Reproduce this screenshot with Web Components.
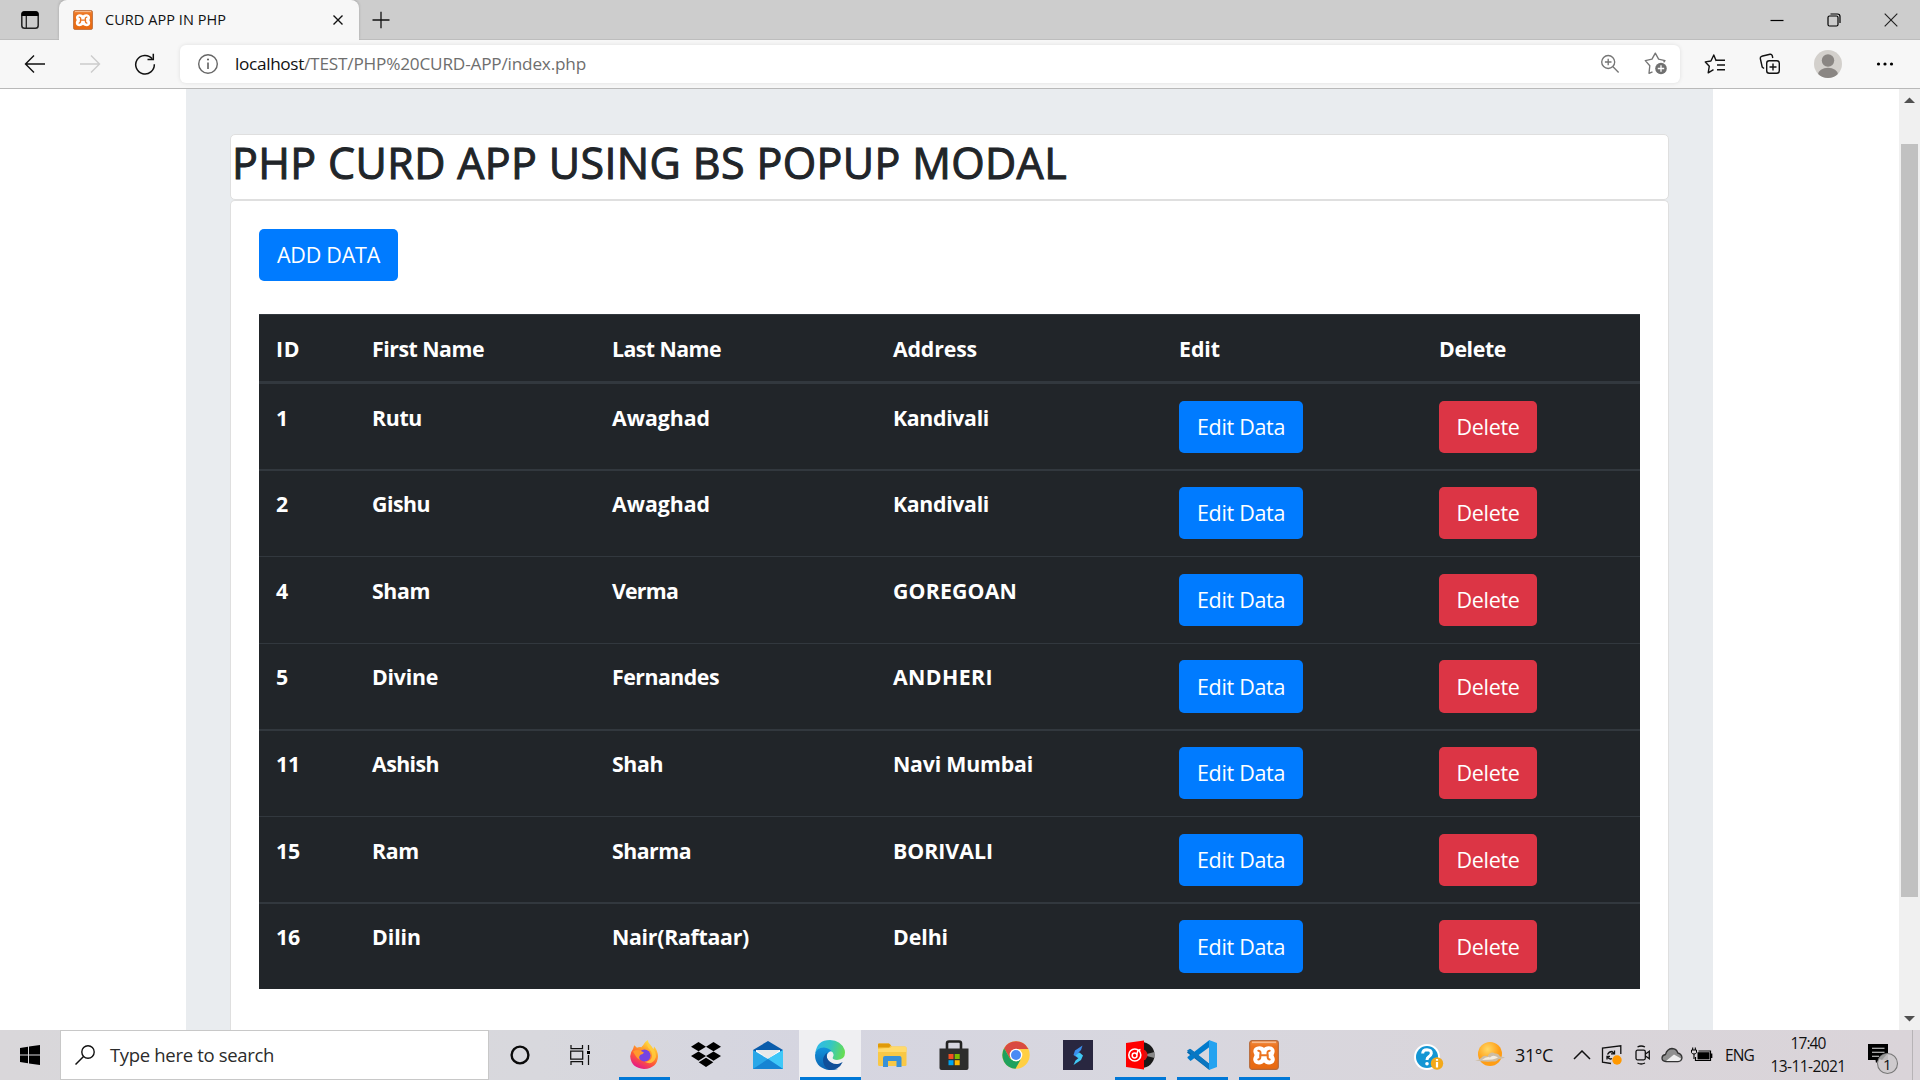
<!DOCTYPE html>
<html lang="en">
<head>
<meta charset="utf-8">
<title>CURD APP IN PHP</title>
<style>
html,body{margin:0;height:100%;overflow:hidden;background:#fff;font-family:"Open Sans","Noto Sans",sans-serif}
</style>
</head>
<body>
<browser-window></browser-window>
<script>
const ICONS = {
  tabs: [20,20,`<rect x="1.8" y="1.8" width="16.4" height="16.4" rx="2.8" fill="none" stroke="#222" stroke-width="1.5"/><path d="M1.5 6V4.200Q1.500 1.200 4.500 1.200H15.500Q18.500 1.200 18.500 4.200V6Z" fill="#000"/><path d="M6.300 6V18" stroke="#222" stroke-width="1.300"/>`],
  xampp: [30,30,`<defs><linearGradient id="x" x2="0" y2="1"><stop offset="0" stop-color="#f28a3c"/><stop offset=".2" stop-color="#ec7420"/><stop offset="1" stop-color="#e8690f"/></linearGradient></defs><rect x=".7" y=".7" width="28.600" height="28.600" rx="2.500" fill="url(#x)" stroke="#b5693a" stroke-width="1.200"/><path d="M3 2.300H27" stroke="#f7b98a" stroke-width="1.600"/><path d="M15 10.500C13.500 8.500 12.300 8 10.300 8C7.500 8 6 9.700 6.200 11.500C6.400 13.300 7.300 14 7.300 15.200C7.300 16.400 6.100 17.200 6 19.300C6 21.500 7.600 22.600 10 22.600C12.500 22.600 13.800 21.600 15 19.800C16.200 21.600 17.500 22.600 20 22.600C22.400 22.600 24 21.500 24 19.300C23.900 17.200 22.700 16.400 22.700 15.200C22.700 14 23.700 13.300 23.800 11.500C24 9.700 22.500 8 19.700 8C17.700 8 16.500 8.500 15 10.500Z" fill="#fff" stroke="#fff" stroke-width="3.600" stroke-linejoin="round"/><path d="M9.300 10.700Q12.500 11 11.200 15.200Q12 19 9.300 19.600M20.700 10.700Q17.500 11 18.800 15.200Q18 19 20.700 19.600M11.200 15.200H18.800" fill="none" stroke="#ec7420" stroke-width="2" stroke-linecap="round"/>`],
  x: [12,12,`<path d="M1.500 1.500L10.500 10.500M10.500 1.500L1.500 10.500" stroke="#111" stroke-width="1.400"/>`],
  plus: [18,18,`<path d="M9 .8V17.200M.5 9H17.500" stroke="#111" stroke-width="1.300"/>`],
  min: [14,14,`<path d="M.5 7.500H13.500" stroke="#000" stroke-width="1.200"/>`],
  max: [14,14,`<rect x="1" y="3" width="10" height="10" rx="1.500" fill="none" stroke="#000" stroke-width="1.200"/><path d="M3.500 1H10.500Q13 1 13 3.500V10" fill="none" stroke="#000" stroke-width="1.200"/>`],
  close: [14,14,`<path d="M.7 .7L13.300 13.300M13.300 .7L.7 13.300" stroke="#222" stroke-width="1.150"/>`],
  back: [22,20,`<path d="M21 10H1.500M10 1.500L1.500 10L10 18.500" fill="none" stroke="#111" stroke-width="1.400"/>`],
  fwd: [22,20,`<path d="M1 10H20.500M12 1.500L20.500 10L12 18.500" fill="none" stroke="#ccc" stroke-width="1.400"/>`],
  reload: [22,22,`<path d="M18.200 5.800A9.300 9.300 0 1 0 20.300 11.200" fill="none" stroke="#111" stroke-width="1.500"/><path d="M19.300 .8V6.500H13.500" fill="none" stroke="#111" stroke-width="1.500"/>`],
  info: [22,22,`<circle cx="11" cy="11" r="9.300" fill="none" stroke="#666" stroke-width="1.400"/><path d="M11 9.500V16" stroke="#555" stroke-width="1.500"/><circle cx="11" cy="6.600" r="1" fill="#555"/>`],
  zoom: [20,20,`<circle cx="8.200" cy="8" r="6.500" fill="none" stroke="#767676" stroke-width="1.350"/><path d="M13 12.800L18.600 18.400M8.200 4.700V11.300M4.900 8H11.500" stroke="#767676" stroke-width="1.350"/>`],
  staradd: [24,24,`<path d="M8.500 20.800L5 22.300L5.800 14.800L1.300 9.600L8 8.200L11.300 2.200L14.600 8.200L21 9.600L19.600 11.300" transform="translate(0 -1)" fill="none" stroke="#767676" stroke-width="1.350" stroke-linejoin="round"/><circle cx="17" cy="16.500" r="5.800" fill="#707070"/><path d="M17 13.300V19.700M13.800 16.500H20.200" stroke="#fff" stroke-width="1.300"/>`],
  favs: [22,22,`<path d="M12.200 8L9.800 2L6.900 8L1.300 8.900L5.300 13.200L4.200 19.800L9.500 16.700" fill="none" stroke="#111" stroke-width="1.400" stroke-linejoin="round"/><path d="M12 7.200H21M13 12H21M13 16.800H21" stroke="#111" stroke-width="1.400"/>`],
  coll: [22,22,`<rect x="7.700" y="7.700" width="12.600" height="12.600" rx="2.500" fill="none" stroke="#111" stroke-width="1.400"/><path d="M14 10.500V17.500M10.500 14H17.500" stroke="#111" stroke-width="1.400"/><path d="M5 15.500L3.200 14L1.300 5.500Q1 3.800 2.700 3.300L11 1.300Q12.600 1 13.200 2.500L13.800 5" fill="none" stroke="#111" stroke-width="1.400"/>`],
  avatar: [28,28,`<defs><clipPath id="c"><circle cx="14" cy="14" r="14"/></clipPath></defs><g clip-path="url(#c)"><rect width="28" height="28" fill="#d3d0cc"/><circle cx="14" cy="10.500" r="6.200" fill="#8a8683"/><ellipse cx="14" cy="24.500" rx="10" ry="6.800" fill="#8a8683"/></g>`],
  dots: [18,6,`<circle cx="2.500" cy="3" r="1.600"/><circle cx="9" cy="3" r="1.600"/><circle cx="15.500" cy="3" r="1.600"/>`],
  win: [20,20,`<path d="M0 3L8 1.800V9.400H0ZM9 1.600L20 0V9.400H9ZM0 10.400H8V18.200L0 17ZM9 10.400H20V20L9 18.400Z"/>`],
  search: [20,20,`<circle cx="13" cy="7" r="6.200" fill="none" stroke="#111" stroke-width="1.400"/><path d="M8.500 11.500L.5 19.500" stroke="#111" stroke-width="1.500"/>`],
  cortana: [20,20,`<circle cx="10" cy="10" r="8.400" fill="none" stroke="#0a0a0a" stroke-width="2.400"/>`],
  task: [22,20,`<path d="M2 0V3.500H13.500V0M2 20V16.500H13.500V20M1.700 6H13.700V14H1.700ZM19.500 0V5M19.500 10V20" fill="none" stroke="#111" stroke-width="1.250"/><rect x="18" y="6" width="3" height="3"/>`],
  firefox: [30,30,`<defs><linearGradient id="f" x1=".8" y1="0" x2=".3" y2="1"><stop offset="0" stop-color="#fff44f"/><stop offset=".35" stop-color="#ffa52a"/><stop offset=".65" stop-color="#ff5a36"/><stop offset="1" stop-color="#e4148c"/></linearGradient></defs><path d="M4 9L5.200 5.200L8 7.800Q10 6.800 12.300 7.200Q14.500 5 15.200 3.500Q16 1.500 19 0Q18.700 3 21 5Q23.500 7 24.300 9.500L25.200 6.500Q29 11 29 16.500Q28.300 28.200 15 29Q2.200 28.200 1.200 16.300Q1.500 12 4 9Z" fill="url(#f)"/><circle cx="15.500" cy="15.500" r="6" fill="#7543e3"/><path d="M4 11.500Q8 9 12 11L15 12.500Q14 14.500 11.500 14.800Q9 17 11 20Q8 19 6 15Z" fill="#ff982e"/><path d="M20.500 9.500Q24 13 22.500 18Q20 22 15.500 21.800Q24 26 27 17Q27 11 24 9Q22 5 19 2Q17 6 20.500 9.500Z" fill="#ffd13f" opacity=".8"/>`],
  dropbox: [30,26,`<path d="M7.500 0L15 4.700L7.500 9.300L0 4.700ZM22.500 0L30 4.700L22.500 9.300L15 4.700ZM7.500 9.400L15 14L7.500 18.700L0 14ZM22.500 9.400L30 14L22.500 18.700L15 14ZM15 15.700L22.300 20.300L15 25L7.700 20.300Z" fill="#000"/>`],
  mail: [30,28,`<path d="M0 9L15 0L30 9V14H0Z" fill="#0a5cab"/><path d="M3 9H27V20H3Z" fill="#fff"/><path d="M3 9H27L15 18Z" fill="#e9e9e9"/><path d="M0 9L15 18L30 9V28H0Z" fill="#2aa7e8"/><path d="M15 18L30 9V28Z" fill="#3fc8f8"/><path d="M0 28L15 18L30 28Z" fill="#1684d3"/>`],
  edge: [30,30,`<defs><linearGradient id="e1" x1="0" y1=".3" x2="1" y2=".5"><stop offset="0" stop-color="#2fb9ec"/><stop offset=".5" stop-color="#35c6c2"/><stop offset="1" stop-color="#66dd52"/></linearGradient><linearGradient id="e2" x2="0" y2="1"><stop offset="0" stop-color="#1393dc"/><stop offset="1" stop-color="#0b62b0"/></linearGradient></defs><path d="M.3 13Q2 0 15 0Q26 .3 29.700 10Q31.500 19.500 22 20Q16.500 19.700 18 17Q20 13 15.500 11Q8 7 .3 13Z" fill="url(#e1)"/><path d="M0 15Q1 7.500 9 7.500Q14 8 16.500 11Q11 12.500 12 18Q14 27 23 29Q18 30.500 12 29.700Q0 26.500 0 15Z" fill="url(#e2)"/><path d="M12.500 12.500Q10.500 16 13 19.800Q17 25 24 23.700L27.700 22Q24 30 14.500 30Q8 27 8 20Q8.200 15.500 12.500 12.500Z" fill="#10509a"/>`],
  folder: [30,24,`<path d="M1 1.500Q1 .5 2 .5H12L15 3.500H28Q29.500 3.500 29.500 5V22Q29.500 23 28 23H2.500Q1 23 1 21.500Z" fill="#f9c846"/><path d="M1 4V1.500Q1 .5 2 .5H12L14 2.300L12 4.500H1Z" fill="#e09a09"/><path d="M1 6Q8 5 13 5L15 3.500H28Q29.500 3.500 29.500 5V9H1Z" fill="#ffda6b"/><path d="M6 24V15Q6 13 8 13H22.500Q24.500 13 24.500 15V24H19.500V18H11V24Z" fill="#3991d8"/>`],
  store: [30,30,`<path d="M8 9V3.500Q8 1.500 10 1.500H20Q22 1.500 22 3.500V9" fill="none" stroke="#222" stroke-width="2.600"/><path d="M.5 8.500H29.500V28Q29.500 30 27.500 30H2.500Q.5 30 .5 28Z" fill="#2d2d2d"/><path d="M9.500 14H14.500V19H9.500Z" fill="#f25022"/><path d="M15.700 14H20.700V19H15.700Z" fill="#7fba00"/><path d="M9.500 20.200H14.500V25.200H9.500Z" fill="#00a4ef"/><path d="M15.700 20.200H20.700V25.200H15.700Z" fill="#ffb900"/>`],
  chrome: [28,28,`<circle cx="14" cy="14" r="13.700" fill="#ffcf42"/><path d="M14 14L8 17.500L2.130 7.150A13.700 13.700 0 0 1 25.870 7.150L26.500 8H14Z" fill="#d94b41"/><path d="M2.130 7.150L8 17.400L14 20.500L19 18L13.500 27.700A13.700 13.700 0 0 1 2.130 7.150Z" fill="#1fa15d"/><circle cx="14" cy="14" r="6.300" fill="#fff"/><circle cx="14" cy="14" r="5" fill="#4a8af4"/>`],
  bolt: [30,30,`<rect width="30" height="30" fill="#292740"/><path d="M19.500 5.500L12 10.500L10.500 15L15 18L18.500 15.200L15.500 12.500L18 10Z" fill="#3b8fec"/><path d="M10.500 25L18 20L20 15.500L16.500 12.500L12.500 15.500L15.500 18L12.500 20.500Z" fill="#40c8f4"/>`],
  music: [30,30,`<circle cx="16.500" cy="15" r="13" fill="#191919"/><path d="M18 15L29.500 12V18Z" fill="#888"/><path d="M16.500 9A6 6 0 0 1 16.500 21Z" fill="#d11"/><path d="M1 3L19 .5V29.500L1 27Z" fill="#f00"/><circle cx="9.800" cy="15" r="6" fill="none" stroke="#fff" stroke-width="1.600"/><circle cx="9.600" cy="15.500" r="2.400" fill="none" stroke="#fff" stroke-width="1.500"/><path d="M11.500 15L13 10.500L15.500 9.500" stroke="#fff" stroke-width="1.500" fill="none"/>`],
  vscode: [30,30,`<path d="M1 11L3.500 9L22.500 24V30L0 12.500Z" fill="#0065a9"/><path d="M.5 18L3.500 21L22.500 7V0L.5 17Z" fill="#007acc"/><path d="M0 10.500L3 8.800L12 15.500L22.500 24V30Z" fill="#0b76c0"/><path d="M22 0L30 3V27L22 30Z" fill="#24a3f0"/>`],
  help: [30,28,`<circle cx="13" cy="14" r="13" fill="#fff"/><circle cx="13" cy="14" r="11" fill="#1496d4"/><path d="M8.700 10.500Q8.800 6.700 13 6.700Q17.500 6.800 17.300 10.500Q17 12.500 14.500 14Q13 15 13 17" fill="none" stroke="#fff" stroke-width="3"/><circle cx="13" cy="20.800" r="1.800" fill="#fff"/><circle cx="23" cy="20.500" r="6.200" fill="#f3a91b"/><path d="M23 19V24.500M23 16V17.800" stroke="#fff" stroke-width="2.200"/>`],
  sun: [30,26,`<defs><radialGradient id="s" cx=".4" cy=".3"><stop offset="0" stop-color="#ffd966"/><stop offset="1" stop-color="#ff9d14"/></radialGradient></defs><circle cx="15" cy="12" r="12" fill="url(#s)"/><path d="M0 18.500Q4 18 6 16Q9 12.500 12.500 14.500Q15.500 8.500 20 11.500Q23.500 11 25 14.500Q29 15 30 15.800Q25 17 23 17.500Q22 20 17 19.500Q9 20 0 18.500Z" fill="#cdbda5"/><path d="M7 18Q12 14 15 15.500Q18 12 23 15.500Q20 18 7 18Z" fill="#f3ece0"/>`],
  chev: [18,10,`<path d="M1 9L9 1L17 9" fill="none" stroke="#111" stroke-width="1.500"/>`],
  sync: [22,22,`<path d="M19.800 10V1.800L1.500 4V18.200L10 19.500" fill="none" stroke="#111" stroke-width="1.300"/><path d="M6.500 10.500Q8 7.500 11 7.500L13 9.500M13.500 6.500V9.800H10M6 15.500V12.500H9M6.500 13Q8.500 16 11 14.500" fill="none" stroke="#111" stroke-width="1.300"/><circle cx="16" cy="16" r="4.700" fill="#ff9800"/>`],
  meet: [16,20,`<rect x="1" y="5.200" width="9.300" height="9.600" rx="1.500" fill="none" stroke="#111" stroke-width="1.300"/><path d="M10.500 9L14.300 6.200V13.800L10.500 11M2.500 2Q6 0 10 2M2.500 18Q6 20 10 18" fill="none" stroke="#111" stroke-width="1.300"/>`],
  cloud: [22,16,`<path d="M5 14.500Q1 14.300 1 11Q1.200 8 4.500 7.500Q6 2 11 1.500Q15.500 1.700 16.800 6Q20.800 7 21 11Q20.500 14.300 17 14.500Z" fill="#909090" stroke="#333" stroke-width="1.300"/><path d="M5 13.900L13 7.500L20 11.500Q19.500 13.700 17 13.900Z" fill="#eee"/>`],
  battery: [22,16,`<path d="M7.500 4H19.500V13.500H4.500V10" fill="none" stroke="#000" stroke-width="1.200"/><rect x="6.500" y="5.200" width="12" height="7.200" fill="#000"/><path d="M20.600 6.500V11" stroke="#000" stroke-width="1.500"/><path d="M.5 3H5.500V5.500Q5 7 3 7Q1 7 .5 5.500Z" fill="none" stroke="#000"/><path d="M1.700 .5V3M4.300 .5V3M3 7V12" fill="none" stroke="#000" stroke-width="1.100"/>`],
  note: [32,32,`<path d="M1 1H21V17H12L9 20L8.500 17H1Z" fill="#000"/><path d="M5 5.200H17.500M5 9.200H17.500M5 13.200H12" stroke="#ddd" stroke-width="1.100"/><circle cx="20.500" cy="20.500" r="10" fill="#ccc9cb" fill-opacity=".93" stroke="#777" stroke-width="1.100"/><path d="M12 15.500Q15 11.500 20 11L15 17Z" fill="#999"/>`],
  up: [11,6,`<path d="M0 6L5.500 .5L11 6Z" fill="#505050"/>`],
  down: [11,6,`<path d="M0 0L5.500 5.500L11 0Z" fill="#505050"/>`]
};

/* An icon from the table above; optional w and h override its natural size. */
customElements.define('ui-icon', class extends HTMLElement {
  constructor(){ super(); this.attachShadow({mode:'open'}); }
  connectedCallback(){
    const [w,h,art] = ICONS[this.getAttribute('name')];
    this.shadowRoot.innerHTML = `<style>:host{display:block;flex:none}svg{display:block}</style>
      <svg width="${this.getAttribute('w')||w}" height="${this.getAttribute('h')||h}" viewBox="0 0 ${w} ${h}">${art}</svg>`;
  }
});

/* One line of text, tracked so that it occupies the width given by w. */
customElements.define('fit-text', class extends HTMLElement {
  constructor(){ super(); this.attachShadow({mode:'open'}).innerHTML =
    `<style>:host{display:block;white-space:nowrap;flex:none}span{display:inline-block}</style><span><slot></slot></span>`; }
  connectedCallback(){
    const w = +this.getAttribute('w'), s = this.shadowRoot.querySelector('span');
    this.style.width = w + 'px';
    s.style.letterSpacing = (w - s.getBoundingClientRect().width) / this.textContent.length + 'px';
  }
});

customElements.define('bs-button', class extends HTMLElement {
  constructor(){ super(); this.attachShadow({mode:'open'}); }
  connectedCallback(){
    this.shadowRoot.innerHTML = `<style>
      :host{display:flex;justify-content:center;align-items:center;box-sizing:border-box;height:52px;border-radius:5px;color:#fff;font-size:21.5px;line-height:30px;background:#007bff}
      :host([kind=danger]){background:#dc3545}
      </style><fit-text w="${this.getAttribute('tw')}">${this.getAttribute('label')}</fit-text>`;
  }
});

customElements.define('tab-strip', class extends HTMLElement {
  constructor(){ super(); this.attachShadow({mode:'open'}).innerHTML = `<style>
    :host{display:flex;height:40px;box-sizing:border-box;background:#cdcdcd;align-items:center;box-shadow:inset 0 -1px #bdbdbd}
    .menu{width:59px;display:flex;justify-content:center}
    .tab{width:300px;height:40px;box-sizing:border-box;background:#f7f7f7;border-radius:8px 8px 0 0;display:flex;align-items:center;padding:0 15px 0 14px;box-shadow:0 -1px 3px #0003}
    .tab fit-text{margin:-2px 0 0 12px;font-size:14.5px;color:#111}
    .tab .x{margin-left:auto}
    .new{margin-left:13px}
    .win{margin-left:auto;display:flex;gap:43px;padding-right:22px}
    </style><div class="menu"><ui-icon name="tabs"></ui-icon></div>
    <div class="tab"><ui-icon name="xampp" w="20" h="20"></ui-icon><fit-text w="121">CURD APP IN PHP</fit-text><ui-icon class="x" name="x"></ui-icon></div>
    <ui-icon class="new" name="plus"></ui-icon>
    <div class="win"><ui-icon name="min"></ui-icon><ui-icon name="max"></ui-icon><ui-icon name="close"></ui-icon></div>`; }
});

customElements.define('tool-bar', class extends HTMLElement {
  constructor(){ super(); this.attachShadow({mode:'open'}).innerHTML = `<style>
    :host{display:flex;height:49px;box-sizing:border-box;background:#f7f7f7;border-bottom:1px solid #b9b9b9;align-items:center;padding-left:24px}
    .nav{display:flex;gap:33px;align-items:center;width:156px}
    .addr{width:1500px;height:38px;box-sizing:border-box;border-radius:6px;background:#fff;box-shadow:0 0 4px #0000001a;display:flex;align-items:center;padding:0 12px 0 17px}
    .url{margin-left:16px;font-size:17.2px;display:flex;color:#6e6e6e;line-height:24px}
    .url .h{color:#111}
    .in{margin-left:auto;display:flex;gap:24px;align-items:center}
    .out{display:flex;align-items:center;padding-left:24px}
    .out .b{margin-left:33px}.out .c{margin-left:33px}.out .d{margin-left:34px}
    </style><div class="nav"><ui-icon name="back"></ui-icon><ui-icon name="fwd"></ui-icon><ui-icon name="reload"></ui-icon></div>
    <div class="addr"><ui-icon name="info"></ui-icon><div class="url"><fit-text class="h" w="69">localhost</fit-text><fit-text w="282">/TEST/PHP%20CURD-APP/index.php</fit-text></div>
    <div class="in"><ui-icon name="zoom"></ui-icon><ui-icon name="staradd"></ui-icon></div></div>
    <div class="out"><ui-icon name="favs"></ui-icon><ui-icon class="b" name="coll"></ui-icon><ui-icon class="c" name="avatar"></ui-icon><ui-icon class="d" name="dots"></ui-icon></div>`; }
});

/* A table row: cells are "text:width" pairs separated by "|". */
customElements.define('data-row', class extends HTMLElement {
  constructor(){ super(); this.attachShadow({mode:'open'}); }
  connectedCallback(){
    const g = n => this.getAttribute(n);
    const cells = g('cells').split('|').map(c => { const [t,w] = c.split(':'); return `<fit-text w="${w}">${t}</fit-text>`; }).join('');
    const bt = g('actions');
    this.shadowRoot.innerHTML = `<style>
      :host{display:grid;grid-template-columns:96px 240px 281px 286px 260px 1fr;box-sizing:border-box;height:${g('h')}px;border-top:${g('line')}px solid #32383e;padding:${g('pt')}px 0 0 17px;color:#fff;font-weight:700;font-size:21.3px;line-height:33px;align-items:start}
      fit-text{margin-top:${bt ? 0 : -1}px}
      bs-button{font-weight:400;height:${bt||52}px}
      </style>${cells}${bt ? `<bs-button label="Edit Data" tw="88" style="width:124px"></bs-button><bs-button kind="danger" label="Delete" tw="63" style="width:98px"></bs-button>` : ''}`;
  }
});

customElements.define('page-view', class extends HTMLElement {
  constructor(){ super(); this.attachShadow({mode:'open'}).innerHTML = `<style>
    :host{display:flex;flex:1;min-height:0;background:#fff;overflow:hidden}
    .page{width:1899px;flex:none;padding-left:186px;box-sizing:border-box;display:flex}
    .jumbo{width:1527px;background:#e9ecef;box-sizing:border-box;padding:45px 44px 0;display:flex;flex-direction:column}
    .card{background:#fff;border:1px solid #dfdfdf;border-radius:5px;box-sizing:border-box}
    .head{height:66px;flex:none}
    .head fit-text{font-size:43px;font-weight:400;-webkit-text-stroke:1px #212529;line-height:53px;color:#212529;margin-top:1px;padding-left:1px}
    .body{flex:1;border-bottom:0;border-radius:5px 5px 0 0;padding:28px}
    .table{margin-top:33px;background:#212529}
    .bar{width:21px;background:#f0f0f0;box-sizing:border-box;display:flex;flex-direction:column;align-items:center;padding:8px 0 8px}
    .thumb{width:17px;height:753px;background:#c1c1c1;margin-top:41px}
    .bar .d{margin-top:auto}
    </style>
    <div class="page"><div class="jumbo">
      <div class="card head"><fit-text w="835">PHP CURD APP USING BS POPUP MODAL</fit-text></div>
      <div class="card body"><bs-button label="ADD DATA" tw="103" style="width:139px"></bs-button>
      <div class="table">
        <data-row h="67" line="1" pt="18" cells="ID:24|First Name:112|Last Name:109|Address:84|Edit:41|Delete:67"></data-row>
        <data-row h="88" line="3" pt="17" actions="52" cells="1:12|Rutu:50|Awaghad:98|Kandivali:96"></data-row>
        <data-row h="87" line="2" pt="16" actions="52" cells="2:12|Gishu:58|Awaghad:98|Kandivali:96"></data-row>
        <data-row h="87" line="1" pt="17" actions="52" cells="4:12|Sham:58|Verma:66|GOREGOAN:124"></data-row>
        <data-row h="86" line="1" pt="16" actions="53" cells="5:12|Divine:66|Fernandes:107|ANDHERI:100"></data-row>
        <data-row h="87" line="2" pt="16" actions="52" cells="11:24|Ashish:67|Shah:51|Navi Mumbai:140"></data-row>
        <data-row h="86" line="1" pt="17" actions="52" cells="15:24|Ram:47|Sharma:79|BORIVALI:100"></data-row>
        <data-row h="87" line="2" pt="16" actions="53" cells="16:24|Dilin:49|Nair(Raftaar):137|Delhi:55"></data-row>
      </div></div>
    </div></div>
    <div class="bar"><ui-icon name="up" w="11" h="6"></ui-icon><div class="thumb"></div><ui-icon class="d" name="down" w="11" h="6"></ui-icon></div>`; }
});

customElements.define('app-slot', class extends HTMLElement {
  constructor(){ super(); this.attachShadow({mode:'open'}).innerHTML = `<style>
    :host{display:flex;width:62px;height:50px;box-sizing:border-box;flex-direction:column;align-items:center}
    :host([active]){background:#efeff2}
    .i{height:47px;padding-top:3px;box-sizing:border-box;display:flex;align-items:center}
    .u{width:51px;height:3px}
    :host([open]) .u,:host([active]) .u{background:#0078d7}
    :host([active]) .u{width:61px}</style><div class="i"><slot></slot></div><div class="u"></div>`; }
});

customElements.define('task-bar', class extends HTMLElement {
  constructor(){ super(); this.attachShadow({mode:'open'}).innerHTML = `<style>
    :host{display:flex;height:50px;background:linear-gradient(90deg,#d9d7da,#d8d8dd 28%,#d5d5e0 42%,#d8d7df 60%,#d9d5da 80%,#dad4d9);color:#111}
    .start{width:60px;display:flex;justify-content:center;align-items:center}
    .search{width:429px;box-sizing:border-box;border:1px solid #c8c8c8;background:#fff;display:flex;align-items:center;padding-left:14px}
    .search fit-text{margin-left:15px;font-size:18.500px;color:#2b2b2b;margin-top:-1px}
    .apps{display:flex}
    .tray{margin-left:auto;display:flex;align-items:center;width:506px}
    .temp{font-size:18px;margin-left:10px}
    .eng{font-size:15.5px;margin-left:12px}
    .clock{width:74px;margin-left:17px;font-size:15.5px;line-height:23px;display:flex;flex-direction:column;align-items:center}
    .note{display:grid;margin-left:22px;align-self:center;margin-top:8px}
    .note>*{grid-area:1/1}
    .note span{font-size:15px;line-height:16px;padding:13px 0 0 16px}
    .end{margin-left:13px;width:1px;height:50px;background:#b7b3b6}
    </style>
    <div class="start"><ui-icon name="win"></ui-icon></div>
    <div class="search"><ui-icon name="search"></ui-icon><fit-text w="164">Type here to search</fit-text></div>
    <div class="apps">
      <app-slot><ui-icon name="cortana"></ui-icon></app-slot><app-slot><ui-icon name="task" style="margin-right:4px"></ui-icon></app-slot>
      <app-slot open><ui-icon name="firefox"></ui-icon></app-slot><app-slot><ui-icon name="dropbox"></ui-icon></app-slot>
      <app-slot><ui-icon name="mail"></ui-icon></app-slot><app-slot active><ui-icon name="edge"></ui-icon></app-slot>
      <app-slot><ui-icon name="folder"></ui-icon></app-slot><app-slot><ui-icon name="store"></ui-icon></app-slot>
      <app-slot><ui-icon name="chrome"></ui-icon></app-slot><app-slot><ui-icon name="bolt"></ui-icon></app-slot>
      <app-slot open><ui-icon name="music"></ui-icon></app-slot><app-slot open><ui-icon name="vscode"></ui-icon></app-slot>
      <app-slot open><ui-icon name="xampp"></ui-icon></app-slot>
    </div>
    <div class="tray">
      <ui-icon name="help" style="margin-top:3px"></ui-icon><ui-icon name="sun" style="margin-left:31px"></ui-icon>
      <fit-text class="temp" w="38">31°C</fit-text>
      <ui-icon name="chev" style="margin-left:20px"></ui-icon><ui-icon name="sync" style="margin-left:10px"></ui-icon>
      <ui-icon name="meet" style="margin-left:12px"></ui-icon><ui-icon name="cloud" style="margin-left:10px"></ui-icon>
      <ui-icon name="battery" style="margin-left:8px"></ui-icon>
      <fit-text class="eng" w="29">ENG</fit-text>
      <div class="clock"><fit-text w="35">17:40</fit-text><fit-text w="75">13-11-2021</fit-text></div>
      <div class="note"><ui-icon name="note"></ui-icon><span>1</span></div><div class="end"></div>
    </div>`; }
});

customElements.define('browser-window', class extends HTMLElement {
  constructor(){ super(); this.attachShadow({mode:'open'}).innerHTML = `<style>:host{display:flex;flex-direction:column;width:1920px;height:1080px;overflow:hidden}</style>
    <tab-strip></tab-strip><tool-bar></tool-bar><page-view></page-view><task-bar></task-bar>`; }
});
</script>
</body>
</html>
